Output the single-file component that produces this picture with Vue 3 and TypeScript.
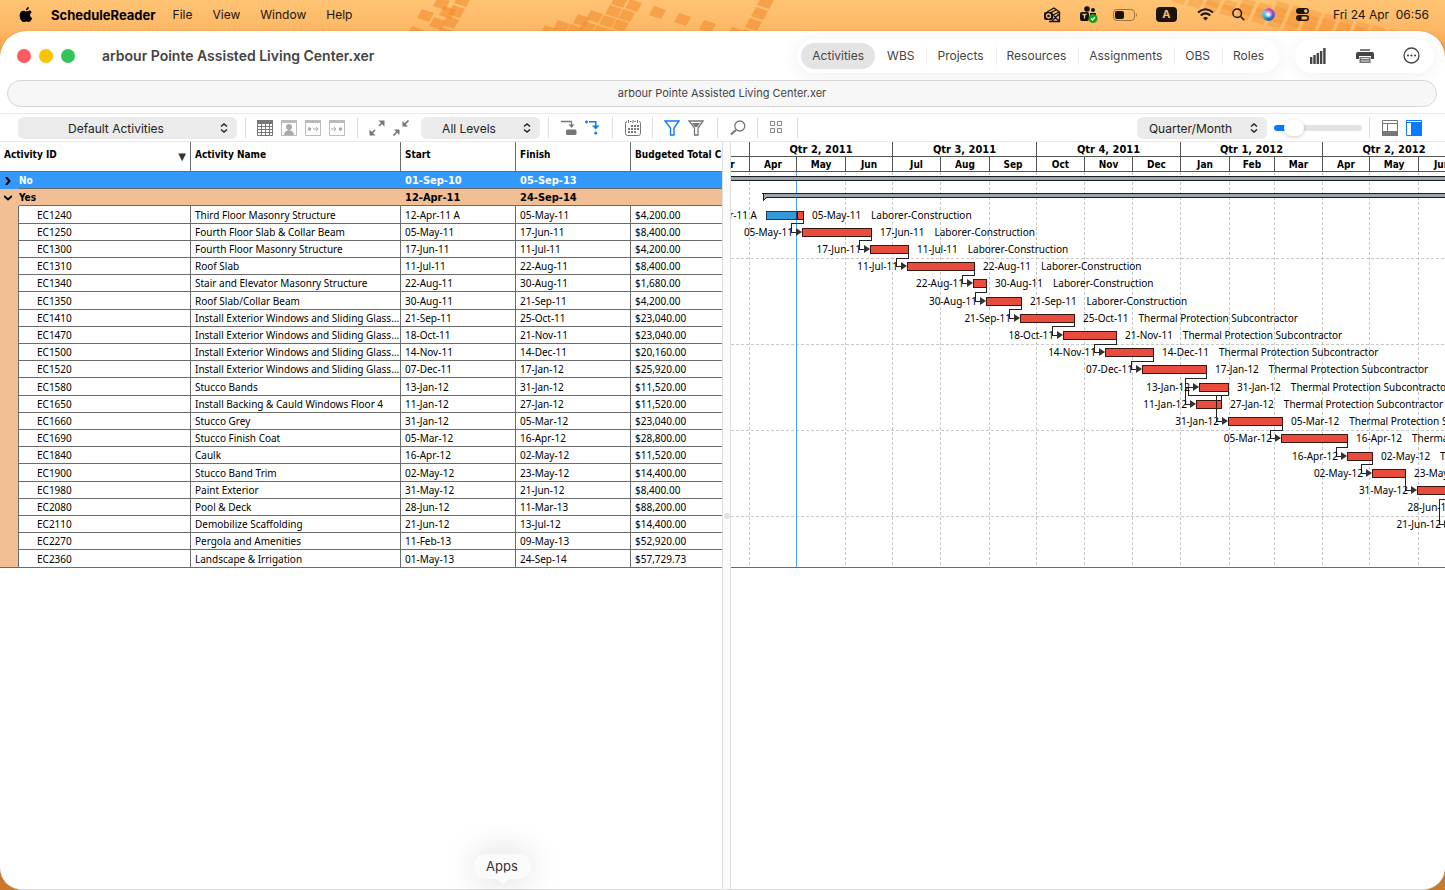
<script setup lang="ts">
interface Activity {
  id: string
  name: string
  start: string
  finish: string
  cost: string
  from?: number
  to?: number
  resource?: string
}

const laborer = 'Laborer-Construction'
const thermal = 'Thermal Protection Subcontractor'
const windows = 'Install Exterior Windows and Sliding Glass Doors'

const activities: Activity[] = [
  { id: 'EC1240', name: 'Third Floor Masonry Structure', start: '12-Apr-11 A', finish: '05-May-11', cost: '$4,200.00', from: 35, to: 72, resource: laborer },
  { id: 'EC1250', name: 'Fourth Floor Slab & Collar Beam', start: '05-May-11', finish: '17-Jun-11', cost: '$8,400.00', from: 71, to: 140, resource: laborer },
  { id: 'EC1300', name: 'Fourth Floor Masonry Structure', start: '17-Jun-11', finish: '11-Jul-11', cost: '$4,200.00', from: 139, to: 177, resource: laborer },
  { id: 'EC1310', name: 'Roof Slab', start: '11-Jul-11', finish: '22-Aug-11', cost: '$8,400.00', from: 176, to: 243, resource: laborer },
  { id: 'EC1340', name: 'Stair and Elevator Masonry Structure', start: '22-Aug-11', finish: '30-Aug-11', cost: '$1,680.00', from: 242, to: 255, resource: laborer },
  { id: 'EC1350', name: 'Roof Slab/Collar Beam', start: '30-Aug-11', finish: '21-Sep-11', cost: '$4,200.00', from: 255, to: 290, resource: laborer },
  { id: 'EC1410', name: windows, start: '21-Sep-11', finish: '25-Oct-11', cost: '$23,040.00', from: 289, to: 343, resource: thermal },
  { id: 'EC1470', name: windows, start: '18-Oct-11', finish: '21-Nov-11', cost: '$23,040.00', from: 332, to: 385, resource: thermal },
  { id: 'EC1500', name: windows, start: '14-Nov-11', finish: '14-Dec-11', cost: '$20,160.00', from: 374, to: 422, resource: thermal },
  { id: 'EC1520', name: windows, start: '07-Dec-11', finish: '17-Jan-12', cost: '$25,920.00', from: 411, to: 475, resource: thermal },
  { id: 'EC1580', name: 'Stucco Bands', start: '13-Jan-12', finish: '31-Jan-12', cost: '$11,520.00', from: 468, to: 497, resource: thermal },
  { id: 'EC1650', name: 'Install Backing & Cauld Windows Floor 4', start: '11-Jan-12', finish: '27-Jan-12', cost: '$11,520.00', from: 465, to: 490, resource: thermal },
  { id: 'EC1660', name: 'Stucco Grey', start: '31-Jan-12', finish: '05-Mar-12', cost: '$23,040.00', from: 497, to: 551, resource: thermal },
  { id: 'EC1690', name: 'Stucco Finish Coat', start: '05-Mar-12', finish: '16-Apr-12', cost: '$28,800.00', from: 550, to: 616, resource: thermal },
  { id: 'EC1840', name: 'Caulk', start: '16-Apr-12', finish: '02-May-12', cost: '$11,520.00', from: 616, to: 641, resource: thermal },
  { id: 'EC1900', name: 'Stucco Band Trim', start: '02-May-12', finish: '23-May-12', cost: '$14,400.00', from: 641, to: 674, resource: thermal },
  { id: 'EC1980', name: 'Paint Exterior', start: '31-May-12', finish: '21-Jun-12', cost: '$8,400.00', from: 686, to: 719, resource: thermal },
  { id: 'EC2080', name: 'Pool & Deck', start: '28-Jun-12', finish: '11-Mar-13', cost: '$88,200.00', from: 730, to: 1130, resource: thermal },
  { id: 'EC2110', name: 'Demobilize Scaffolding', start: '21-Jun-12', finish: '13-Jul-12', cost: '$14,400.00', from: 719, to: 753, resource: thermal },
  { id: 'EC2270', name: 'Pergola and Amenities', start: '11-Feb-13', finish: '09-May-13', cost: '$52,920.00' },
  { id: 'EC2360', name: 'Landscape & Irrigation', start: '01-May-13', finish: '24-Sep-14', cost: '$57,729.73' },
]

const bodyHeight = 396
const rowStep = bodyHeight / (activities.length + 2)
const mid = (i: number) => Math.floor((i + 2.5) * rowStep)
const edge = (i: number) => Math.floor((i + 3) * rowStep)

const bars = activities
  .map((a, i) => ({ ...a, i, from: a.from ?? -1, to: a.to ?? -1, y: mid(i) }))
  .filter((a) => a.from >= 0)

// Finish-to-start links: leave the predecessor, drop between rows, return left of the successor.
const chain = (p: number, s: number) => {
  const a = bars[p]
  const b = bars[s]
  return `M${a.to} ${a.y + 4}V${edge(p)}H${b.from - 11}V${b.y}H${b.from - 5}`
}
const links: string[] = [
  ...[0, 1, 2, 3, 4, 5, 6, 7, 8, 12, 13, 14].map((p) => chain(p, p + 1)),
  `M475 ${mid(9) + 4}V${edge(9)}H454V${mid(11)}H460M454 ${mid(10)}H463`,
  `M497 ${mid(10) + 4}V${edge(10)}H457V${mid(10)}`,
  `M490 ${mid(11)}V${edge(10)}M485 ${edge(10)}V${mid(12)}H492`,
  `M674 ${mid(15)}V${mid(16)}H681`,
  `M719 ${edge(16)}H708V${mid(18)}H715`,
]

const months = [
  { label: 'Mar', from: -31, q: 0 }, { label: 'Apr', from: 18, q: 1 }, { label: 'May', from: 65, q: 1 }, { label: 'Jun', from: 114, q: 1 },
  { label: 'Jul', from: 161, q: 2 }, { label: 'Aug', from: 209, q: 2 }, { label: 'Sep', from: 258, q: 2 },
  { label: 'Oct', from: 305, q: 3 }, { label: 'Nov', from: 353, q: 3 }, { label: 'Dec', from: 401, q: 3 },
  { label: 'Jan', from: 449, q: 4 }, { label: 'Feb', from: 498, q: 4 }, { label: 'Mar', from: 543, q: 4 },
  { label: 'Apr', from: 591, q: 5 }, { label: 'May', from: 638, q: 5 }, { label: 'Jun', from: 687, q: 5 },
  { label: 'Jul', from: 734, q: 6 },
]
const quarterNames = ['', 'Qtr 2, 2011', 'Qtr 3, 2011', 'Qtr 4, 2011', 'Qtr 1, 2012', 'Qtr 2, 2012']
const monthCells = months.slice(0, -1).map((m, i) => ({ ...m, width: months[i + 1].from - m.from }))
const quarterCells = quarterNames.map((label, q) => ({
  label,
  width: monthCells.filter((m) => m.q === q).reduce((sum, m) => sum + m.width, 0),
}))

const tabs = ['Activities', 'WBS', 'Projects', 'Resources', 'Assignments', 'OBS', 'Roles']
const menus = ['File', 'View', 'Window', 'Help']

// Slanted wallpaper tiles: x, y, opacity
const tiles: number[][] = []
for (let k = 0; k < 4; k++) {
  tiles.push([455 - k * 6, -6 + k * 11, 1], [758 - k * 6, -4 + k * 11, 1])
}
tiles.push(
  [434, -3, 1], [418, 9, 1], [440, 6, 1], [430, 17, 1], [408, 26, 1],
  [612, -5, 1], [626, -1, 1], [606, 5, 1], [619, 9, 1], [600, 15, 1], [613, 19, 1], [587, 10, 1], [593, 25, 1], [606, 29, 1],
  [574, 14, 1], [580, 21, 1], [567, 24, 1], [554, 20, 1], [541, 25, 1], [560, 30, 1],
  [650, 6, 1], [675, 13, 1], [700, 20, 1], [728, 27, 1],
)
for (let r = 0; r < 4; r++) {
  for (let c = 0; c < 20; c++) {
    const x = 1172 + r * 34 + c * 16
    const y = -8 + r * 3 + c * 4
    if (y < 44 && x < 1446) tiles.push([x, y, 0.6])
  }
}
</script>

<template>
  <div class="desktop">
    <svg class="wallpaper" width="1445" height="48" aria-hidden="true">
      <g fill="#f08c30">
        <path v-for="(t, i) in tiles" :key="i" :d="`M${t[0] + 4} ${t[1]}l12 4l-5 9l-12 -4z`" :opacity="t[2] * 0.6" />
      </g>
    </svg>

    <header class="menubar">
      <button class="apple" aria-label="Apple menu">
        <svg width="14" height="16" viewBox="0 0 14 16"><path d="M9.9 0C10 1.6 8.600 3.300 7 3.200 6.900 1.700 8.300.2 9.900 0zM12.700 5.400C11.500 6.100 11 7 11.100 8.200c.1 1.400.9 2.300 2.100 2.800-.6 1.700-1.900 4-3.300 4-.9 0-1.400-.6-2.500-.6-1.200 0-1.700.6-2.600.6C2.700 15 .6 11.600.6 8.400c0-3 1.900-4.700 3.800-4.700 1.200 0 2.100.7 2.900.7.800 0 1.800-.8 3.200-.8.800 0 1.700.5 2.200 1.800z" /></svg>
      </button>
      <button class="app-name">ScheduleReader</button>
      <button v-for="m in menus" :key="m">{{ m }}</button>
      <div class="status">
        <svg class="s-outlook" width="17" height="16" viewBox="0 0 17 16" fill="none" stroke="#111" stroke-width="1.300"><path d="M3 5L10 1l5.500 4v9.500H5M6 6l7-3.500M9 8l6-3M9 8l6 6M8 14l7-7" /><rect x="0" y="5" width="9" height="8" rx="2" fill="#111" stroke="none" /><circle cx="4.500" cy="9" r="2" stroke="#ffbb69" /></svg>
        <svg class="s-teams" width="18" height="18" viewBox="0 0 18 18"><g fill="#111"><circle cx="7" cy="3" r="2.800" /><circle cx="13" cy="4" r="2" /><rect x="0" y="6" width="9" height="9" rx="2" /><path d="M10 7h6v4h-6z" /></g><path d="M2.500 8.500h4M4.500 8.500v4" stroke="#ffbb69" stroke-width="1.300" /><circle cx="13" cy="12.500" r="4.500" fill="#15a315" /><path d="M11 12.500l1.500 1.500 2.500-3" stroke="#fff" stroke-width="1.300" fill="none" /></svg>
        <svg class="s-battery" width="25" height="12" viewBox="0 0 25 12"><rect x=".5" y=".5" width="21" height="11" rx="3.500" fill="none" stroke="#9c7442" /><rect x="2" y="2" width="9" height="8" rx="2" fill="#1b140c" /><path d="M23 4q2 2 0 4z" fill="#9c7442" /></svg>
        <span class="s-input">A</span>
        <svg class="s-wifi" width="17" height="13" viewBox="0 0 17 13" fill="none" stroke="#1b140c" stroke-width="2"><path d="M1 4.600q7.500-6.600 15 0M3.700 7.500q4.800-4.200 9.600 0" /><path d="M8.500 12.500L6 10q2.500-2 5 0z" fill="#1b140c" stroke="none" /></svg>
        <svg class="s-search" width="13" height="13" viewBox="0 0 13 13" fill="none" stroke="#1b140c" stroke-width="1.500"><circle cx="5.200" cy="5.200" r="4.300" /><path d="M8.500 8.500L12.300 12.300" /></svg>
        <span class="s-siri"></span>
        <svg class="s-control" width="13" height="13" viewBox="0 0 13 13"><rect x="0" y="0" width="13" height="6" rx="3" fill="#1b140c" /><circle cx="9.800" cy="3" r="1.800" fill="#ffbb69" /><rect x=".7" y="7.700" width="11.600" height="4.600" rx="2.300" fill="none" stroke="#1b140c" stroke-width="1.400" /><circle cx="3.500" cy="10" r="2.300" fill="#1b140c" /></svg>
        <time>Fri 24 Apr&nbsp; 06:56</time>
      </div>
    </header>

    <main class="window">
      <div class="titlebar">
        <div class="lights">
          <button class="red" aria-label="Close"></button><button class="yellow" aria-label="Minimise"></button><button class="green" aria-label="Zoom"></button>
        </div>
        <h1>arbour Pointe Assisted Living Center.xer</h1>
        <nav class="pill tabs">
          <button v-for="(t, i) in tabs" :key="t" :class="{ active: i === 0 }">{{ t }}</button>
        </nav>
        <div class="pill actions">
          <button aria-label="Chart"><svg width="16" height="16" viewBox="0 0 16 16" fill="#444"><path d="M0 9h2.400v7H0zM3.300 7h2.400v9H3.300zM6.600 5H9v11H6.600zM9.900 3h2.400v13H9.900zM13.200 0h2.400v16h-2.400z" /></svg></button>
          <button aria-label="Print"><svg width="18" height="14" viewBox="0 0 18 14" fill="#444"><path d="M4 0h10v2H4z" opacity=".7" /><path d="M2 3h14q2 0 2 2v5h-3V7H3v3H0V5q0-2 2-2z" /><path d="M3.500 8h11v6h-11z" opacity=".75" /><path d="M5 9.500h8M5 12h8" stroke="#fff" stroke-width=".8" /></svg></button>
          <button aria-label="More"><svg width="17" height="17" viewBox="0 0 17 17" fill="none" stroke="#444" stroke-width="1.300"><circle cx="8.500" cy="8.500" r="7.500" /><g fill="#444" stroke="none"><circle cx="5" cy="8.500" r="1.100" /><circle cx="8.500" cy="8.500" r="1.100" /><circle cx="12" cy="8.500" r="1.100" /></g></svg></button>
        </div>
      </div>

      <div class="doc-tab">arbour Pointe Assisted Living Center.xer</div>

      <div class="toolbar">
        <label class="picker p-layout"><select aria-label="Layout"><option>Default Activities</option></select><svg width="8" height="10" viewBox="0 0 8 10"><path d="M1 3.500L4 1l3 2.500M1 6.500L4 9l3-2.500" /></svg></label>
        <i class="sep"></i>
        <div class="group g-views">
          <button aria-label="Table"><svg width="16" height="16" viewBox="0 0 16 16"><path d="M0 0h16v4H0z" fill="#777" /><path d="M.5.5h15v15H.5zM0 6.500h16M0 9.500h16M0 12.500h16M4.500 4v12M8.500 4v12M12.500 4v12" fill="none" stroke="#777" /></svg></button>
          <button aria-label="Resources view"><svg width="16" height="16" viewBox="0 0 16 16"><path d="M0 0h16v3H0z" fill="#bbb" /><path d="M.5.5h15v15H.5z" fill="none" stroke="#bbb" /><circle cx="8" cy="7" r="3" fill="#aaa" /><path d="M3 15q0-4 5-5 5 1 5 5z" fill="#aaa" /></svg></button>
          <button aria-label="Predecessors"><svg width="16" height="16" viewBox="0 0 16 16"><path d="M0 0h16v3H0z" fill="#bbb" /><path d="M.5.5h15v15H.5z" fill="none" stroke="#bbb" /><circle cx="4.500" cy="9" r="1.800" fill="#aaa" /><path d="M8 9h5M11 7l2 2-2 2" fill="none" stroke="#aaa" /></svg></button>
          <button aria-label="Successors"><svg width="16" height="16" viewBox="0 0 16 16"><path d="M0 0h16v3H0z" fill="#bbb" /><path d="M.5.5h15v15H.5z" fill="none" stroke="#bbb" /><circle cx="11.500" cy="9" r="1.800" fill="#aaa" /><path d="M2 9h5M5 7l2 2-2 2" fill="none" stroke="#aaa" /></svg></button>
        </div>
        <i class="sep"></i>
        <div class="group g-expand">
          <button aria-label="Expand all"><svg width="16" height="16" viewBox="0 0 16 16" fill="none" stroke="#777" stroke-width="1.600"><path d="M10 6l4-4M6 10l-4 4" /><path d="M9.500 0.500H15.500V6.500zM.5 9.500V15.500H6.500z" fill="#777" stroke="none" /></svg></button>
          <button aria-label="Collapse all"><svg width="16" height="16" viewBox="0 0 16 16" fill="none" stroke="#777" stroke-width="1.600"><path d="M15.500.5l-4 4M.5 15.500l4-4" /><path d="M9.500 1V6.500H15zM1 9.500H6.500V15z" fill="#777" stroke="none" /></svg></button>
        </div>
        <label class="picker p-levels"><select aria-label="Levels"><option>All Levels</option></select><svg width="8" height="10" viewBox="0 0 8 10"><path d="M1 3.500L4 1l3 2.500M1 6.500L4 9l3-2.500" /></svg></label>
        <i class="sep"></i>
        <div class="group g-links">
          <button aria-label="Progress"><svg width="16" height="16" viewBox="0 0 16 16"><path d="M0 1.500h10.500V6" fill="none" stroke="#777" stroke-width="1.300" /><path d="M7.500 4.500h6l-3 3.500z" fill="#777" /><rect x="5" y="9.500" width="10.500" height="5.500" rx="1.500" fill="#777" /></svg></button>
          <button aria-label="Relationships"><svg width="16" height="16" viewBox="0 0 16 16" fill="#0a7aff"><circle cx="1.500" cy="2" r="1.400" /><path d="M4 1h7.500v5H10V2.500H4zM7 5.500h7.500L10.700 9.500z" /><circle cx="10.700" cy="13" r="1.500" /></svg></button>
        </div>
        <i class="sep"></i>
        <div class="group g-one"><button aria-label="Timescale"><svg width="16" height="16" viewBox="0 0 16 16" fill="none" stroke="#777"><path d="M2 1.500q-1.500 0-1.500 2V13.500q0 2 2 2h11q2 0 2-2V3.500q0-2-1.500-2M5 1.500h1.500M9.500 1.500H11" /><path d="M3.500 0v3M8 0v3M12.500 0v3" /><path d="M6 6h8M3 9h11M3 12h8" stroke-width="2" stroke-dasharray="2 1" /></svg></button></div>
        <i class="sep"></i>
        <div class="group g-filter">
          <button aria-label="Filter"><svg width="16" height="16" viewBox="0 0 16 16" fill="none" stroke="#0a7aff" stroke-width="1.400"><path d="M1 1h14L10 8v7H6.500V8z" /></svg></button>
          <button aria-label="Filter options"><svg width="16" height="16" viewBox="0 0 16 16" fill="none" stroke="#777" stroke-width="1.300"><path d="M1 1h14L10 8v7H6.500V8z" /><path d="M4 3h8l-3 4H7z" fill="#777" stroke="none" /></svg></button>
        </div>
        <i class="sep"></i>
        <div class="group g-one"><button aria-label="Search"><svg width="16" height="16" viewBox="0 0 16 16" fill="none" stroke="#777" stroke-width="1.300"><circle cx="9.800" cy="6" r="5" /><path d="M6 10L1 14.500" stroke-width="2" /></svg></button></div>
        <i class="sep"></i>
        <div class="group g-one"><button class="cols" aria-label="Columns"><svg width="12" height="12" viewBox="0 0 12 12" fill="none" stroke="#888"><path d="M.5.5h4v4h-4zM7.500.5h4v4h-4zM.5 7.500h4v4h-4zM7.500 7.500h4v4h-4z" /></svg></button></div>
        <i class="sep"></i>
        <div class="grow"></div>
        <label class="picker p-scale"><select aria-label="Time scale"><option>Quarter/Month</option></select><svg width="8" height="10" viewBox="0 0 8 10"><path d="M1 3.500L4 1l3 2.500M1 6.500L4 9l3-2.500" /></svg></label>
        <input class="zoom" type="range" min="0" max="100" value="15" aria-label="Zoom" />
        <i class="sep"></i>
        <div class="group g-panes">
          <button aria-label="Bottom pane"><svg width="16" height="16" viewBox="0 0 16 16"><path d="M.5.5h15v15H.5zM0 3.500h16M5.500 3v9" fill="none" stroke="#777" /><path d="M0 11h16v5H0z" fill="#777" /></svg></button>
          <button aria-label="Side pane"><svg width="16" height="16" viewBox="0 0 16 16"><path d="M.5.5h15v15H.5z" fill="#fff" stroke="#0a7aff" /><path d="M0 2.500h16" stroke="#0a7aff" /><path d="M5 3h11v13H5z" fill="#0a7aff" /></svg></button>
        </div>
      </div>

      <div class="content">
        <section class="grid-pane">
          <table>
            <colgroup><col class="c-gut" /><col class="c-id" /><col class="c-name" /><col class="c-date" /><col class="c-date" /><col class="c-cost" /></colgroup>
            <thead>
              <tr><th colspan="2" class="id-head"><div><span>Activity ID</span><i>▼</i></div></th><th>Activity Name</th><th>Start</th><th>Finish</th><th>Budgeted Total Cost</th></tr>
            </thead>
            <tbody>
              <tr class="g-no">
                <td class="gut"><button aria-label="Expand No"><svg width="6" height="8" viewBox="0 0 6 8"><path d="M1 0l3.500 4L1 8" /></svg></button></td>
                <td colspan="2">No</td><td class="date">01-Sep-10</td><td class="date">05-Sep-13</td><td></td>
              </tr>
              <tr class="g-yes">
                <td class="gut"><button aria-label="Collapse Yes"><svg width="8" height="6" viewBox="0 0 8 6"><path d="M0 1l4 3.500L8 1" /></svg></button></td>
                <td colspan="2">Yes</td><td class="date">12-Apr-11</td><td class="date">24-Sep-14</td><td></td>
              </tr>
              <tr v-for="a in activities" :key="a.id" class="item">
                <td class="gut"></td><td class="id">{{ a.id }}</td><td>{{ a.name }}</td><td>{{ a.start }}</td><td>{{ a.finish }}</td><td>{{ a.cost }}</td>
              </tr>
            </tbody>
          </table>
        </section>
        <div class="splitter"><i></i></div>
        <section class="gantt">
          <div class="scale">
            <div class="quarters"><span v-for="(q, i) in quarterCells" :key="i" :style="{ width: q.width + 'px' }">{{ q.label }}</span></div>
            <div class="months"><span v-for="(m, i) in monthCells" :key="i" :style="{ width: m.width + 'px' }">{{ m.label }}</span></div>
          </div>
          <svg class="chart" :height="bodyHeight">
            <g stroke="#c9c9c9" stroke-dasharray="3 2" shape-rendering="crispEdges">
              <line v-for="m in months" :key="m.from" :x1="m.from" :x2="m.from" y1="0" :y2="bodyHeight" />
              <line v-for="k in [5, 10, 15, 20]" :key="k" x1="0" x2="100%" :y1="Math.round(k * rowStep)" :y2="Math.round(k * rowStep)" />
            </g>
            <line x1="65" x2="65" y1="0" :y2="bodyHeight" stroke="#4da3f7" shape-rendering="crispEdges" />
            <rect x="-5" y="4" width="2000" height="4" class="summary" />
            <path d="M31 21H2000V25H36L32 29V21z" class="summary" />
            <g class="links"><path v-for="(d, i) in links" :key="i" :d="d" /></g>
            <g v-for="b in bars" :key="b.id">
              <path v-if="b.i > 0" :d="`M${b.from - 6} ${b.y - 4}l6 4l-6 4z`" fill="#333" />
              <rect :x="b.i ? b.from : 66" :y="b.y - 4" :width="b.to - (b.i ? b.from : 66)" height="8" class="bar" />
              <rect v-if="b.i === 0" :x="b.from" :y="b.y - 4" width="30" height="8" class="bar done" />
              <text :x="b.from - 9" :y="b.y + 4" text-anchor="end">{{ b.start }}</text>
              <text :x="b.to + 9" :y="b.y + 4">{{ b.finish }}<tspan dx="10">{{ b.resource }}</tspan></text>
            </g>
            <g class="links"><path :d="`M485 ${edge(10)}V${mid(12)}`" /></g>
          </svg>
        </section>
      </div>
    </main>
    <div class="dock-tip">Apps</div>
  </div>
</template>

<style>
html, body { margin: 0; overflow: hidden; }
</style>

<style scoped>
* { box-sizing: border-box; }
.desktop { position: relative; height: 100vh; display: flex; flex-direction: column; overflow: hidden; font-family: Inter, "Liberation Sans", sans-serif; background: linear-gradient(#ffc473, #fdb765 30px, #f7953a 60px, #c8792b); }
button { border: 0; padding: 0; background: none; font: inherit; color: inherit; display: flex; align-items: center; justify-content: center; }
svg { display: block; flex: none; }
.wallpaper { position: absolute; left: 0; top: 0; }
.menubar { position: relative; height: 31px; flex: none; display: flex; align-items: center; gap: 20px; padding: 0 16px 2px 19px; font-size: 12px; color: #1b140c; }
.apple { margin-right: -2px; }
.app-name { font-size: 13px; font-weight: 700; color: #000; margin-right: -3px; }
.status { margin-left: auto; display: flex; align-items: center; }
.s-outlook { margin-right: 19px; }
.s-teams { margin-right: 15px; }
.s-battery { margin-right: 18px; }
.s-input { width: 21px; height: 15px; border-radius: 4px; background: #1b140c; color: #ffbb69; font-size: 11px; font-weight: 700; line-height: 15px; text-align: center; margin-right: 20px; }
.s-wifi { margin-right: 18px; }
.s-search { margin-right: 17px; }
.s-siri { width: 13px; height: 13px; border-radius: 50%; background: radial-gradient(circle, #fff 5%, transparent 45%), conic-gradient(#e94f86, #9a4bd0, #3c62d8, #1f6a9c, #35b5c5, #6fc6f5, #e94f86); margin-right: 21px; }
.s-control { margin-right: 24px; }

.window { position: relative; flex: 1; min-height: 0; display: flex; flex-direction: column; background: #fff; border-radius: 26px 26px 22px 22px; border-bottom: 1px solid #dcdcdc; overflow: hidden; box-shadow: 0 0 1px #a0601e; }
.titlebar { height: 49px; flex: none; display: flex; align-items: center; padding: 0 11px 0 17px; color: #444; }
.lights { display: flex; gap: 8px; }
.lights button { width: 14px; height: 14px; border-radius: 50%; }
.red { background: #ff5a5f; }
.yellow { background: #fcc400; }
.green { background: #33c558; }
h1 { margin: 0 auto 0 27px; font-size: 14px; font-weight: 600; }
.pill { height: 34px; border-radius: 17px; background: #fff; box-shadow: 0 2px 18px rgba(0, 0, 0, 0.07); display: flex; align-items: center; }
.tabs { gap: 1px; padding: 0 4px; margin-right: 16px; font-size: 12px; }
.tabs button { height: 26px; padding: 0 11px; border-radius: 13px; position: relative; }
.tabs button.active { background: #e4e4e4; }
.tabs button + button + button::before { content: ""; position: absolute; left: 0; top: 4px; height: 18px; width: 1px; background: #ececec; }
.actions { width: 139px; padding: 0 14px 0 15px; justify-content: space-between; }

.doc-tab { flex: none; height: 27px; margin: 0 8px 6px 7px; border: 1px solid #d6d6d6; border-radius: 14px; background: #f7f7f7; font-size: 11px; line-height: 25px; text-align: center; color: #444; }
.toolbar { flex: none; height: 29px; display: flex; align-items: center; padding: 0 23px 0 18px; border-top: 1px solid #e8e8e8; border-bottom: 1px solid #e8e8e8; }
.picker { position: relative; height: 22px; }
.picker svg { position: absolute; right: 9px; top: 6px; fill: none; stroke: #222; stroke-width: 1.5; pointer-events: none; }
.picker select { appearance: none; width: 100%; height: 22px; border: 0; border-radius: 6px; background: #ebebeb; font: 12px Inter, sans-serif; color: #222; padding: 0 23px 0 0; text-align: center; text-align-last: center; }
.p-layout { width: 219px; margin-right: 8px; }
.p-levels { width: 119px; margin-right: 8px; }
.p-scale { width: 130px; margin-right: 7px; }
.sep { width: 1px; height: 21px; background: #dedede; flex: none; }
.group { display: flex; align-items: center; justify-content: center; gap: 8px; }
.g-views { width: 111px; padding-right: 2px; }
.g-expand { width: 63px; padding-right: 2px; }
.g-links { width: 63px; }
.g-one { width: 39px; }
.g-filter { width: 64px; padding-right: 2px; }
.cols { padding-right: 4px; padding-bottom: 2px; }
.grow { flex: 1; }
.zoom { appearance: none; width: 88px; height: 20px; margin: 0 7px 0 0; background: none; }
.zoom::-webkit-slider-runnable-track { height: 6px; border-radius: 3px; background: linear-gradient(90deg, #0a7aff 15%, #e3e3e3 15%); }
.zoom::-webkit-slider-thumb { appearance: none; width: 20px; height: 16px; margin-top: -5px; border-radius: 8px; background: #fff; box-shadow: 0 1px 4px rgba(0, 0, 0, 0.2); }
.g-panes { margin-left: 12px; }

.content { flex: 1; min-height: 0; display: grid; grid-template-columns: 722fr 9px 714fr; font-family: "Noto Sans", sans-serif; font-size: 10px; color: #000; }
.grid-pane { min-width: 0; overflow: hidden; }
table { table-layout: fixed; width: 100%; height: 426px; border-collapse: separate; border-spacing: 0; }
.c-gut { width: 19px; }
.c-id { width: 172px; }
.c-name { width: 210px; }
.c-date { width: 115px; }
th, td { padding: 0 4px; line-height: 14px; white-space: nowrap; overflow: hidden; text-align: left; border-right: 1px solid #6b6b6b; border-bottom: 1px solid #6b6b6b; }
th:last-child, td:last-child { border-right: 0; padding-right: 0; }
td:nth-child(3) { text-overflow: ellipsis; padding-right: 0; }
th, .g-no td, .g-yes td, .scale { font-family: "DejaVu Sans Condensed", sans-serif; font-weight: 700; }
th { height: 30px; vertical-align: top; padding-top: 6px; }
tbody { height: 396px; }
.id-head div { display: flex; justify-content: space-between; height: 16px; }
.id-head i { font-style: normal; font-family: "DejaVu Sans", sans-serif; color: #333; margin: 2px 0 0; }
.g-no td, .g-yes td { border-right: 0; line-height: 13px; padding-top: 1px; }
td.date { font-size: 11px; }
.g-no td { background: #3399ff; color: #fff; }
.g-yes td { background: #f2be93; }
td.gut { background: #f2be93; padding: 0; border-bottom: 0; }
.g-no td.gut { background: #3399ff; }
.g-no td:nth-child(2), .g-yes td:nth-child(2) { padding-left: 0; }
.gut svg { fill: none; stroke: #000; stroke-width: 2; }
.gut button { width: 16px; height: 12px; }
td.id { padding-left: 18px; }
.item:last-child .gut { border-bottom: 1px solid #6b6b6b; }

.splitter { border-left: 1px solid #dedede; border-right: 1px solid #dedede; background: #fbfbfb; display: flex; align-items: center; justify-content: center; }
.splitter i { width: 6px; height: 6px; border-radius: 50%; background: #e2e2e2; }
.gantt { min-width: 0; overflow: hidden; }
.scale { height: 30px; border-bottom: 1px solid #555; }
.scale > div { display: flex; margin-left: -30px; }
.scale span { flex: none; text-align: center; border-right: 1px solid #555; line-height: 15px; height: 15px; }
.quarters { font-size: 11px; }
.quarters span { border-bottom: 1px solid #555; }
.chart { width: 100%; border-bottom: 1px solid #6b6b6b; overflow: hidden; }
.chart text { fill: #000; }
.summary { fill: #9aa5ad; stroke: #1c1c1c; shape-rendering: crispEdges; }
.bar { fill: #e74c3c; stroke: #3a1714; shape-rendering: crispEdges; }
.bar.done { fill: #3498db; stroke: #1c3c55; }
.links path { fill: none; stroke: #222; shape-rendering: crispEdges; }

.dock-tip { position: absolute; left: calc(50% - 249px); bottom: 11px; width: 57px; height: 25px; border-radius: 12px; background: #fbfbfb; box-shadow: 0 0 34px rgba(0, 0, 0, 0.16); font-size: 13px; line-height: 25px; text-align: center; color: #333; }
.dock-tip::after { content: ""; position: absolute; left: 24px; bottom: -4px; width: 10px; height: 10px; background: #fbfbfb; transform: rotate(45deg); }
</style>
